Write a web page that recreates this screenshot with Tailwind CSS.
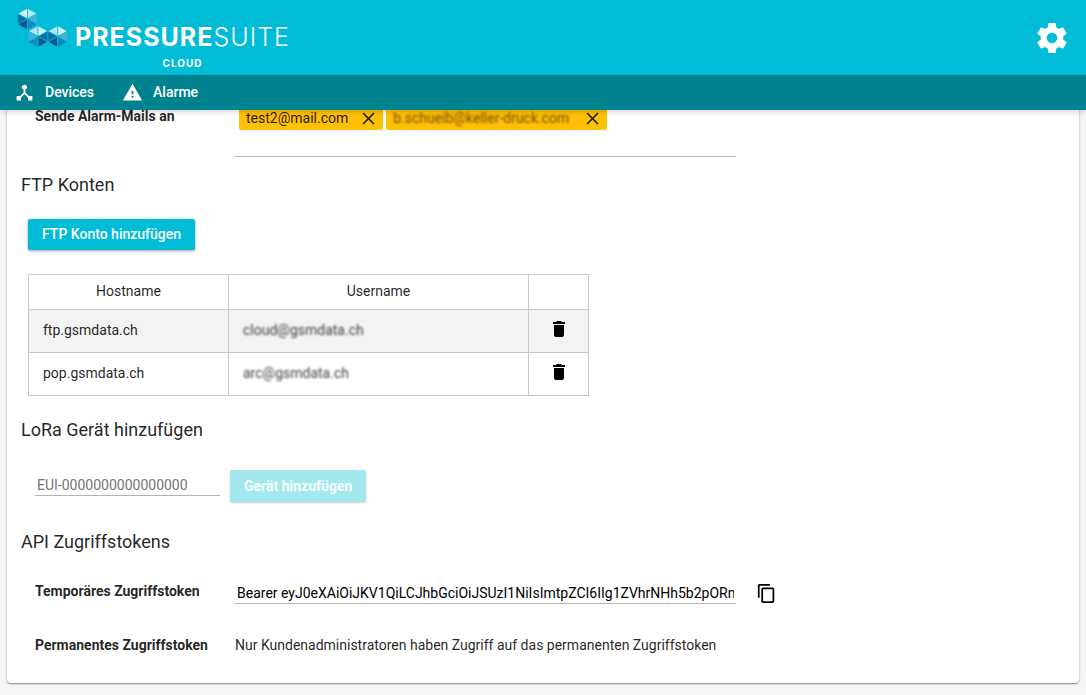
<!DOCTYPE html>
<html lang="de">
<head>
<meta charset="utf-8">
<meta name="viewport" content="width=device-width, initial-scale=1">
<title>PressureSuite Cloud</title>
<script src="https://cdn.jsdelivr.net/npm/@tailwindcss/browser@4"></script>
</head>
<body class="min-h-screen bg-[#f5f5f5] font-[Roboto,sans-serif] text-sm leading-5 text-black/87">
<header class="relative z-10 shadow-md">
  <div class="flex h-[75px] items-center justify-between bg-[#00bcd7] pr-4 pl-[17px] text-white">
    <a href="#" class="flex items-start" aria-label="PressureSuite Cloud">
      <svg class="h-[42px] w-[52px]" viewBox="0 0 52 42" stroke="#00bcd7" stroke-width=".7">
        <g transform="translate(10.5 12)">
          <path fill="#d3f1f8" d="M0 0L-9.8-5.3 0-10.8z"/><path fill="#b4e6f2" d="M0 0V-10.8L9.8-5.3z"/>
          <path fill="#146ba5" d="M0 0L-9.8 5.3V-5.3z"/><path fill="#43b1d8" d="M0 0L9.8-5.3V5.3z"/>
          <path fill="#0a5692" d="M0 0V10.8L-9.8 5.3z"/><path fill="#1785bb" d="M0 0L9.8 5.3 0 10.8z"/>
        </g>
        <g transform="translate(21 29.500)">
          <path fill="#b4e6f2" d="M0 0L-9.8-5.3 0-10.8z"/><path fill="#d3f1f8" d="M0 0V-10.8L9.8-5.3z"/>
          <path fill="#43b1d8" d="M0 0L-9.8 5.3V-5.3z"/><path fill="#146ba5" d="M0 0L9.8-5.3V5.3z"/>
          <path fill="#1785bb" d="M0 0V10.8L-9.8 5.3z"/><path fill="#0a5692" d="M0 0L9.8 5.3 0 10.8z"/>
        </g>
        <g transform="translate(40.700 29.500)">
          <path fill="#b4e6f2" d="M0 0L-9.8-5.3 0-10.8z"/><path fill="#d3f1f8" d="M0 0V-10.8L9.8-5.3z"/>
          <path fill="#146ba5" d="M0 0L-9.8 5.3V-5.3z"/><path fill="#43b1d8" d="M0 0L9.8-5.3V5.3z"/>
          <path fill="#0a5692" d="M0 0V10.8L-9.8 5.3z"/><path fill="#1785bb" d="M0 0L9.8 5.3 0 10.8z"/>
        </g>
      </svg>
      <span class="flex flex-col items-center gap-[6px] pt-4 pl-[6px] font-[Inter,sans-serif]">
        <span class="text-[25px] leading-7 tracking-[1px]"><span class="font-bold">PRESSURE</span><span class="font-light">SUITE</span></span>
        <span class="text-[10px] leading-3 font-bold tracking-widest">CLOUD</span>
      </span>
    </a>
    <button type="button" aria-label="Einstellungen">
      <svg class="size-9" viewBox="0 0 24 24" fill="currentColor"><path d="M19.430 12.980c.04-.32.07-.64.07-.98s-.03-.66-.07-.98l2.110-1.650c.19-.15.24-.42.12-.64l-2-3.460c-.12-.22-.39-.3-.61-.22l-2.490 1c-.52-.4-1.080-.73-1.690-.98l-.38-2.650C14.460 2.180 14.250 2 14 2h-4c-.25 0-.46.18-.49.42l-.38 2.650c-.61.25-1.170.59-1.690.98l-2.490-1c-.23-.09-.49 0-.61.22l-2 3.460c-.13.22-.07.49.12.64l2.110 1.650c-.04.32-.07.65-.07.98s.03.66.07.98l-2.110 1.650c-.19.15-.24.42-.12.64l2 3.460c.12.22.39.3.61.22l2.490-1c.52.4 1.080.73 1.690.98l.38 2.650c.03.24.24.42.49.42h4c.25 0 .46-.18.49-.42l.38-2.650c.61-.25 1.170-.59 1.690-.98l2.490 1c.23.09.49 0 .61-.22l2-3.460c.12-.22.07-.49-.12-.64l-2.110-1.650zM12 15.500c-1.930 0-3.500-1.570-3.500-3.500s1.570-3.500 3.500-3.500 3.500 1.570 3.500 3.500-1.570 3.500-3.500 3.500z"/></svg>
    </button>
  </div>
  <nav class="flex h-[35px] items-center gap-7 bg-[#00838f] px-[14px] pb-px font-medium text-white">
    <a href="#" class="flex items-center gap-[10px]">
      <svg class="size-[21px]" viewBox="0 0 24 24" fill="currentColor"><path d="M17 16l-4-4V8.820C14.160 8.400 15 7.300 15 6c0-1.660-1.340-3-3-3S9 4.340 9 6c0 1.300.84 2.400 2 2.820V12l-4 4H3v5h5v-3.050l4-4.200 4 4.200V21h5v-5h-4z"/></svg>
      Devices
    </a>
    <a href="#" class="flex items-center gap-[10px]">
      <svg class="size-[21px]" viewBox="0 0 24 24" fill="currentColor"><path d="M1 21h22L12 2 1 21zm12-3h-2v-2h2v2zm0-4h-2v-4h2v4z"/></svg>
      Alarme
    </a>
  </nav>
</header>

<main class="-mt-2 px-[7px] pb-3">
  <div class="rounded bg-white px-[14px] pb-7 shadow-[0_1px_1px_rgba(0,0,0,0.3),0_1px_3px_rgba(0,0,0,0.2)]">
    <div class="flex px-[14px]">
      <span class="w-[200px] shrink-0 pt-1 font-bold">Sende Alarm-Mails an</span>
      <div class="flex h-[55px] w-full max-w-[501px] items-start gap-[3px] border-b border-black/30 px-1 pt-1">
        <span class="flex h-6 items-center gap-[14px] rounded-xs bg-[#ffc107] pr-2 pl-[7px]">test2@mail.com
          <button type="button" aria-label="test2@mail.com entfernen"><svg class="size-[13px]" viewBox="0 0 13 13" fill="none" stroke="currentColor" stroke-width="1.600"><path d="M1 1l11 11M12 1L1 12"/></svg></button>
        </span>
        <span class="flex h-6 items-center gap-[14px] rounded-xs bg-[#ffc107] pr-2 pl-[7px]"><span class="w-[179px] overflow-hidden whitespace-nowrap text-[#7a4a08] blur-[1px]">b.schueib@keller-druck.com</span>
          <button type="button" aria-label="Adresse entfernen"><svg class="size-[13px]" viewBox="0 0 13 13" fill="none" stroke="currentColor" stroke-width="1.600"><path d="M1 1l11 11M12 1L1 12"/></svg></button>
        </span>
      </div>
    </div>

    <section class="pt-4">
      <h2 class="text-lg leading-6">FTP Konten</h2>
      <div class="px-[7px] pt-[22px]">
        <button type="button" class="h-[31px] rounded-xs bg-[#00bcd7] px-[14px] pb-px font-medium text-white shadow-[0_1px_3px_rgba(0,0,0,0.4)]">FTP Konto hinzufügen</button>
        <table class="mt-6 w-[561px] table-fixed border-collapse border border-[#c8c8c8]">
          <thead>
            <tr class="h-[35px]">
              <th scope="col" class="w-[200px] border border-[#c8c8c8] pt-0 pb-[2px] font-normal">Hostname</th>
              <th scope="col" class="w-[300px] border border-[#c8c8c8] pt-0 pb-[2px] font-normal">Username</th>
              <th class="w-[60px] border border-[#c8c8c8]"></th>
            </tr>
          </thead>
          <tbody>
            <tr class="h-[43px] bg-[#f3f3f3]">
              <td class="border border-[#c8c8c8] px-[14px] pt-0 pb-[2px]">ftp.gsmdata.ch</td>
              <td class="border border-[#c8c8c8] px-[14px] pt-0 pb-[2px]"><span class="text-[#40404a] blur-[1px]">cloud@gsmdata.ch</span></td>
              <td class="border border-[#c8c8c8] px-0 pt-0 pb-1 text-black"><button type="button" class="mx-auto block" aria-label="ftp.gsmdata.ch löschen"><svg class="h-4 w-3" viewBox="0 0 12 16" fill="currentColor"><path d="M0 1h3l1-1h4l1 1h3v2H0zM1 4h10v10q0 2-2 2H3q-2 0-2-2z"/></svg></button></td>
            </tr>
            <tr class="h-[43px]">
              <td class="border border-[#c8c8c8] px-[14px] pt-0 pb-[2px]">pop.gsmdata.ch</td>
              <td class="border border-[#c8c8c8] px-[14px] pt-0 pb-[2px]"><span class="text-[#40404a] blur-[1px]">arc@gsmdata.ch</span></td>
              <td class="border border-[#c8c8c8] px-0 pt-0 pb-1 text-black"><button type="button" class="mx-auto block" aria-label="pop.gsmdata.ch löschen"><svg class="h-4 w-3" viewBox="0 0 12 16" fill="currentColor"><path d="M0 1h3l1-1h4l1 1h3v2H0zM1 4h10v10q0 2-2 2H3q-2 0-2-2z"/></svg></button></td>
            </tr>
          </tbody>
        </table>
      </div>
    </section>

    <section class="pt-[22px]">
      <h2 class="text-lg leading-6">LoRa Gerät hinzufügen</h2>
      <div class="flex items-start gap-[10px] px-[14px] pt-7">
        <input type="text" aria-label="EUI" placeholder="EUI-0000000000000000" class="mt-1 h-[22px] w-[185px] border-b border-black/30 px-[2px] placeholder:text-[#757575]">
        <button type="button" disabled class="h-8 rounded-xs bg-[#a3e7ef] px-[14px] font-bold text-white/90 shadow-[0_1px_2px_rgba(0,0,0,0.2)]">Gerät hinzufügen</button>
      </div>
    </section>

    <section class="pt-7">
      <h2 class="text-lg leading-6">API Zugriffstokens</h2>
      <div class="flex items-start px-[14px] pt-[27px]">
        <label for="token" class="w-[200px] shrink-0 font-bold">Temporäres Zugriffstoken</label>
        <input id="token" type="text" readonly value="Bearer eyJ0eXAiOiJKV1QiLCJhbGciOiJSUzI1NiIsImtpZCI6IIg1ZVhrNHh5b2pORnVtMWtsMll0djhkbE5QNC1jNTdkTzZRR1RWQndhTmsifQ" class="mt-px h-[22px] w-full max-w-[501px] border-b border-black/30 px-[2px] text-black">
        <button type="button" class="ml-[21px] pt-[3px] text-black" aria-label="Token kopieren"><svg class="size-[19px]" viewBox="1 1 22 22" fill="currentColor"><path d="M16 1H4c-1.100 0-2 .9-2 2v14h2V3h12V1zm3 4H8c-1.100 0-2 .9-2 2v14c0 1.100.9 2 2 2h11c1.100 0 2-.9 2-2V7c0-1.100-.9-2-2-2zm0 16H8V7h11v14z"/></svg></button>
      </div>
      <div class="flex items-start px-[14px] pt-[31px]">
        <span class="w-[200px] shrink-0 font-bold">Permanentes Zugriffstoken</span>
        <span>Nur Kundenadministratoren haben Zugriff auf das permanenten Zugriffstoken</span>
      </div>
    </section>
  </div>
</main>
</body>
</html>
